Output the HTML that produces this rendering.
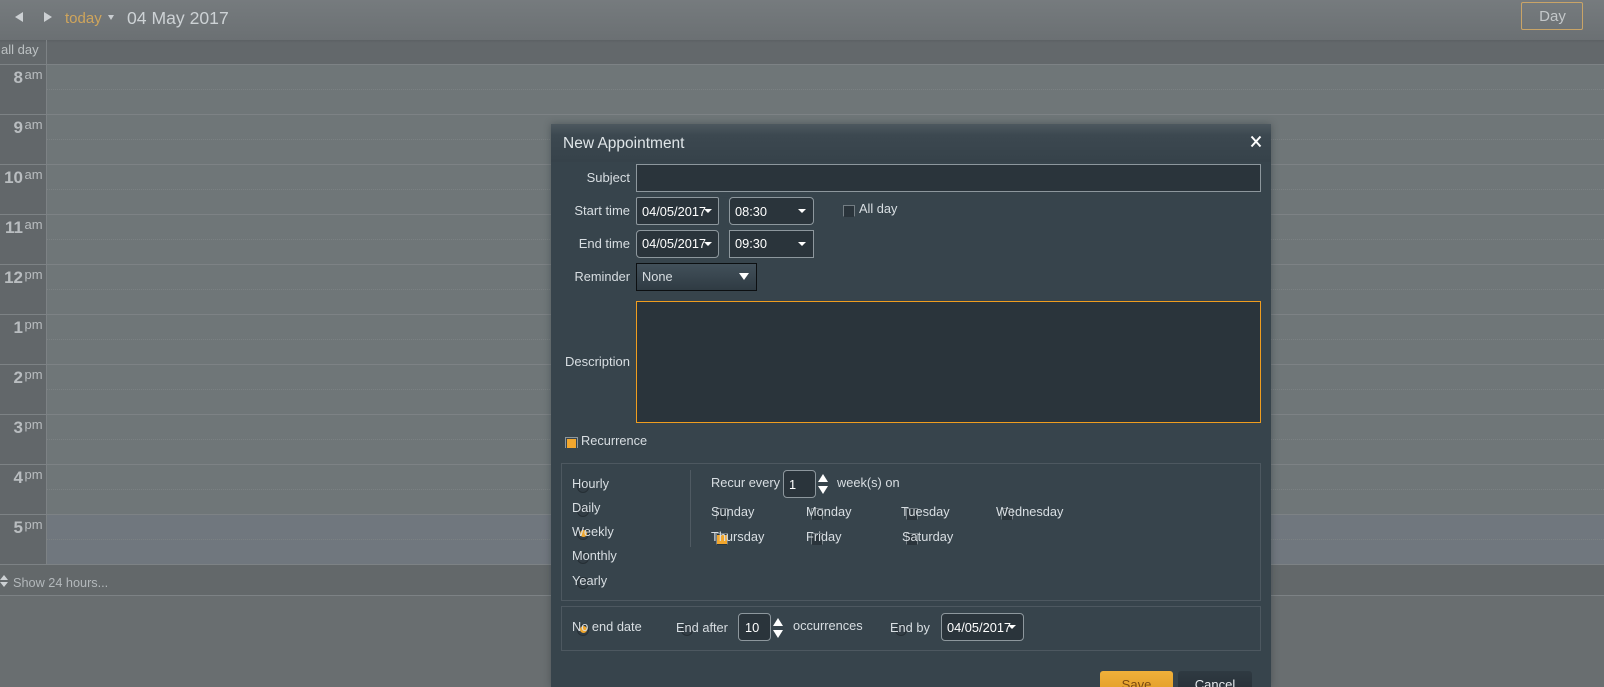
<!DOCTYPE html>
<html><head><meta charset="utf-8"><title>New Appointment</title>
<style>
html,body{margin:0;padding:0;width:1604px;height:687px;overflow:hidden;background:#696e70}
body{position:relative;font-family:"Liberation Sans",Arial,sans-serif;font-size:13px}
div,span.t,span.ap{position:absolute}
.t{white-space:nowrap;line-height:16px;color:#d8dee2;font-size:12.8px}
.r{text-align:right;width:100px;left:530px;font-size:13px}
.hl{left:47px;width:1557px;height:1px;background:#7d8285}
.dl{left:47px;width:1557px;height:0;border-top:1px dotted #7b8183}
.gl{left:0;width:47px;height:1px;background:#7d8285}
.n{font-weight:bold;font-size:17px;color:#b9bdc0;right:1581px;line-height:20px;white-space:nowrap}
.ap{left:24.5px;font-size:13px;line-height:16px;color:#b9bdc0;white-space:nowrap}
.inp{background:#2a343b;border:1px solid #8d979d;box-sizing:border-box}
.tri{width:0;height:0;border-left:4px solid transparent;border-right:4px solid transparent;border-top:4px solid #fff}
.up{width:0;height:0;border-left:5.5px solid transparent;border-right:5.5px solid transparent;border-bottom:8px solid #fff}
.dn{width:0;height:0;border-left:5.5px solid transparent;border-right:5.5px solid transparent;border-top:8px solid #fff}
.rad{width:10px;height:10px;border-radius:50%;background:#323d45;border:1px solid #262f35}
.dot{width:7px;height:7px;border-radius:50%;background:#f0a72e}
.cb{width:10px;height:10px;background:#2a343b;border:1px solid #737d83;border-bottom:1px solid #2a343b}
.pn{border:1px solid #4d5860;box-sizing:border-box}
</style></head><body>

<!-- toolbar -->
<div style="left:0;top:0;width:1604px;height:40px;background:linear-gradient(#767b7e,#6b7073)"></div>
<div style="left:15px;top:12px;width:0;height:0;border-top:5.5px solid transparent;border-bottom:5.5px solid transparent;border-right:8px solid #ccd0d3"></div>
<div style="left:44px;top:12px;width:0;height:0;border-top:5.5px solid transparent;border-bottom:5.5px solid transparent;border-left:8px solid #ccd0d3"></div>
<span class="t" style="left:65px;top:10px;font-size:15px;line-height:18px;color:#cfa55c">today</span>
<div style="left:107.5px;top:15px;width:0;height:0;border-left:3.5px solid transparent;border-right:3.5px solid transparent;border-top:5px solid #c9cdd0"></div>
<span class="t" style="left:127px;top:8px;font-size:17.6px;line-height:21px;color:#cdd2d5">04 May 2017</span>
<div style="left:1521px;top:2px;width:62px;height:28px;box-sizing:border-box;border:1px solid #c9a467;border-radius:2px;text-align:center;font-size:15px;line-height:27px;color:#c3c7c9;padding-left:1px">Day</div>

<!-- grid -->
<div style="left:0;top:40px;width:1604px;height:24px;background:#63686b"></div>
<div style="left:0;top:40px;width:1604px;height:3px;background:linear-gradient(#5c6164,#63686b)"></div>
<div style="left:0;top:64px;width:46px;height:500px;background:#62676a"></div>
<div style="left:47px;top:64px;width:1557px;height:500px;background:#6f7678"></div>
<div style="left:47px;top:514px;width:1557px;height:50px;background:#70777e"></div>
<div style="left:46px;top:40px;width:1px;height:524px;background:#7d8285"></div>
<span class="t" style="left:1px;top:42px;font-size:13px;color:#bcc1c3">all day</span>

<div class="gl" style="top:64px;width:1604px"></div><div class="dl" style="top:89px"></div>
<div class="gl" style="top:114px;width:1604px"></div><div class="dl" style="top:139px"></div>
<div class="gl" style="top:164px;width:1604px"></div><div class="dl" style="top:189px"></div>
<div class="gl" style="top:214px;width:1604px"></div><div class="dl" style="top:239px"></div>
<div class="gl" style="top:264px;width:1604px"></div><div class="dl" style="top:289px"></div>
<div class="gl" style="top:314px;width:1604px"></div><div class="dl" style="top:339px"></div>
<div class="gl" style="top:364px;width:1604px"></div><div class="dl" style="top:389px"></div>
<div class="gl" style="top:414px;width:1604px"></div><div class="dl" style="top:439px"></div>
<div class="gl" style="top:464px;width:1604px"></div><div class="dl" style="top:489px"></div>
<div class="gl" style="top:514px;width:1604px"></div><div class="dl" style="top:539px"></div>

<div class="n" style="top:68px">8</div><span class="ap" style="top:67px">am</span>
<div class="n" style="top:118px">9</div><span class="ap" style="top:117px">am</span>
<div class="n" style="top:168px">10</div><span class="ap" style="top:167px">am</span>
<div class="n" style="top:218px">11</div><span class="ap" style="top:217px">am</span>
<div class="n" style="top:268px">12</div><span class="ap" style="top:267px">pm</span>
<div class="n" style="top:318px">1</div><span class="ap" style="top:317px">pm</span>
<div class="n" style="top:368px">2</div><span class="ap" style="top:367px">pm</span>
<div class="n" style="top:418px">3</div><span class="ap" style="top:417px">pm</span>
<div class="n" style="top:468px">4</div><span class="ap" style="top:467px">pm</span>
<div class="n" style="top:518px">5</div><span class="ap" style="top:517px">pm</span>

<!-- show 24 bar -->
<div style="left:0;top:564px;width:1604px;height:32px;background:#63686a;border-top:1px solid #7d8285;box-sizing:border-box"></div>
<div style="left:0;top:595px;width:1604px;height:1px;background:#7d8285"></div>
<div style="left:0;top:575px;width:0;height:0;border-left:4px solid transparent;border-right:4px solid transparent;border-bottom:5px solid #ccd0d3"></div>
<div style="left:0;top:582px;width:0;height:0;border-left:4px solid transparent;border-right:4px solid transparent;border-top:5px solid #ccd0d3"></div>
<span class="t" style="left:13px;top:575px;font-size:12.7px;color:#b3b8bb">Show 24 hours...</span>

<!-- dialog -->
<div style="left:551px;top:124px;width:720px;height:563px;background:#37444c;box-shadow:0 0 7px rgba(40,50,55,.45)"></div>
<div style="left:551px;top:124px;width:720px;height:38px;background:linear-gradient(#4d585f,#3c4850 30%,#36424a 100%)"></div>
<span class="t" style="left:563px;top:135px;font-size:15.5px;line-height:18px;color:#dfe5e8">New Appointment</span>
<svg style="position:absolute;left:1249px;top:135px" width="14" height="13" viewBox="0 0 14 13"><path d="M2.5 1.5 L11.5 11.5 M11.5 1.5 L2.5 11.5" stroke="#fff" stroke-width="2" fill="none"/></svg>

<span class="t r" style="top:170px">Subject</span>
<div class="inp" style="left:636px;top:164px;width:625px;height:28px"></div>

<span class="t r" style="top:203px">Start time</span>
<div class="inp" style="left:636px;top:197px;width:83px;height:28px;border-radius:2px"></div>
<span class="t" style="left:642px;top:204px;color:#fff">04/05/2017</span>
<div class="tri" style="left:704px;top:209px"></div>
<div class="inp" style="left:729px;top:197px;width:85px;height:28px;border-radius:4px"></div>
<span class="t" style="left:735px;top:204px;color:#fff">08:30</span>
<div class="tri" style="left:798px;top:209px"></div>
<div class="cb" style="left:843px;top:205px"></div>
<span class="t" style="left:859px;top:201px">All day</span>

<span class="t r" style="top:236px">End time</span>
<div class="inp" style="left:636px;top:230px;width:83px;height:28px;border-radius:4px"></div>
<span class="t" style="left:642px;top:236px;color:#fff">04/05/2017</span>
<div class="tri" style="left:704px;top:242px"></div>
<div class="inp" style="left:729px;top:230px;width:85px;height:28px"></div>
<span class="t" style="left:735px;top:236px;color:#fff">09:30</span>
<div class="tri" style="left:798px;top:242px"></div>

<span class="t r" style="top:269px;font-size:12.8px">Reminder</span>
<div style="left:636px;top:263px;width:121px;height:28px;box-sizing:border-box;border:1px solid #0c0f11;background:linear-gradient(#42505a,#2f3b43)"></div>
<span class="t" style="left:642px;top:269px">None</span>
<div style="left:739px;top:273px;width:0;height:0;border-left:5px solid transparent;border-right:5px solid transparent;border-top:7px solid #fff"></div>

<span class="t r" style="top:354px">Description</span>
<div style="left:636px;top:301px;width:625px;height:122px;box-sizing:border-box;border:1px solid #ef9d1f;background:#2a343b"></div>

<div style="left:565px;top:437px;width:13px;height:11px;box-sizing:border-box;border:1px solid #8d979d;border-bottom:0;background:#37444c"></div>
<div style="left:567px;top:439px;width:9px;height:9px;background:#f2a72e"></div>
<span class="t" style="left:581px;top:433px">Recurrence</span>

<!-- recurrence panel -->
<div class="pn" style="left:561px;top:463px;width:700px;height:138px"></div>
<div style="left:690px;top:470px;width:1px;height:77px;background:#4f5a62"></div>

<div class="rad" style="left:577px;top:481px"></div>
<div class="rad" style="left:577px;top:505px"></div>
<div class="rad" style="left:577px;top:528px"></div>
<div class="dot" style="left:579.5px;top:530px"></div>
<div class="rad" style="left:577px;top:552px"></div>
<div class="rad" style="left:577px;top:577px"></div>
<span class="t" style="left:572px;top:476px">Hourly</span>
<span class="t" style="left:572px;top:500px">Daily</span>
<span class="t" style="left:572px;top:524px">Weekly</span>
<span class="t" style="left:572px;top:548px">Monthly</span>
<span class="t" style="left:572px;top:573px">Yearly</span>

<span class="t" style="left:711px;top:475px">Recur every</span>
<div class="inp" style="left:783px;top:470px;width:33px;height:28px;border-radius:4px"></div>
<span class="t" style="left:789px;top:477px;color:#fff">1</span>
<div class="up" style="left:818px;top:474px"></div>
<div class="dn" style="left:818px;top:486px"></div>
<span class="t" style="left:837px;top:475px">week(s) on</span>

<div class="cb" style="left:716px;top:508px"></div>
<div class="cb" style="left:811px;top:508px"></div>
<div class="cb" style="left:906px;top:508px"></div>
<div class="cb" style="left:1001px;top:508px"></div>
<div class="cb" style="left:716px;top:533px"></div>
<div style="left:717px;top:535px;width:10px;height:9px;background:#f2a72e"></div>
<div class="cb" style="left:811px;top:533px"></div>
<div class="cb" style="left:906px;top:533px"></div>
<span class="t" style="left:711px;top:504px">Sunday</span>
<span class="t" style="left:806px;top:504px">Monday</span>
<span class="t" style="left:901px;top:504px">Tuesday</span>
<span class="t" style="left:996px;top:504px">Wednesday</span>
<span class="t" style="left:711px;top:529px">Thursday</span>
<span class="t" style="left:806px;top:529px">Friday</span>
<span class="t" style="left:902px;top:529px">Saturday</span>

<!-- end panel -->
<div class="pn" style="left:561px;top:606px;width:700px;height:45px"></div>
<div class="rad" style="left:577px;top:624px"></div>
<div class="dot" style="left:579.5px;top:626px"></div>
<span class="t" style="left:572px;top:619px">No end date</span>
<div class="rad" style="left:681px;top:624px"></div>
<span class="t" style="left:676px;top:620px">End after</span>
<div class="inp" style="left:738px;top:613px;width:33px;height:28px;border-radius:4px"></div>
<span class="t" style="left:745px;top:620px;color:#fff">10</span>
<div class="up" style="left:773px;top:618px"></div>
<div class="dn" style="left:773px;top:630px"></div>
<span class="t" style="left:793px;top:618px">occurrences</span>
<div class="rad" style="left:895px;top:624px"></div>
<span class="t" style="left:890px;top:620px">End by</span>
<div class="inp" style="left:941px;top:613px;width:83px;height:28px;border-radius:4px"></div>
<span class="t" style="left:947px;top:620px;color:#fff">04/05/2017</span>
<div class="tri" style="left:1008px;top:625px"></div>

<!-- buttons -->
<div style="left:1100px;top:671px;width:73px;height:30px;border-radius:3px 3px 0 0;background:linear-gradient(#f0b03a,#dd9722);text-align:center;font-size:13px;line-height:28px;color:#7a4a10">Save</div>
<div style="left:1178px;top:671px;width:74px;height:30px;border-radius:3px 3px 0 0;background:linear-gradient(#2f3a42,#232c33);text-align:center;font-size:13px;line-height:28px;color:#e6ebee">Cancel</div>

</body></html>
